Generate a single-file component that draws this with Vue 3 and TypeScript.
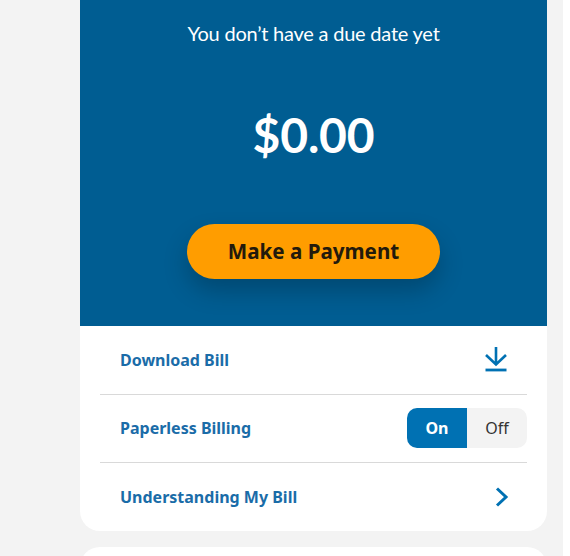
<script setup lang="ts">
const title = "You don’t have a due date yet";
</script>

<template>
  <div class="page">
    <div class="col">
      <section class="card">
        <div class="hero">
          <p class="due">{{ title }}</p>
          <p class="amount">$0.00</p>
          <button class="pay">Make a Payment</button>
        </div>
        <ul class="rows">
          <li class="row first">
            <span class="label">Download Bill</span>
            <svg class="icon-dl" width="24" height="26" viewBox="0 0 24 26" fill="none" stroke="#0071b3" stroke-width="2.600">
              <path d="M12 1v17.500M2 9l10 9.500L22 9" />
              <path d="M1.500 24h21" stroke-width="2.800" />
            </svg>
          </li>
          <li class="row middle">
            <span class="label">Paperless Billing</span>
            <div class="toggle">
              <span class="on">On</span>
              <span class="off">Off</span>
            </div>
          </li>
          <li class="row last">
            <span class="label">Understanding My Bill</span>
            <svg class="icon-ch" width="14" height="20" viewBox="0 0 14 20" fill="none" stroke="#0071b3" stroke-width="3">
              <path d="M2 1.500 11 10l-9 8.500" />
            </svg>
          </li>
        </ul>
      </section>
      <section class="next"></section>
    </div>
  </div>
</template>

<style>
html, body { margin: 0; background: #fff; }
</style>

<style scoped>
.page {
  width: 563px;
  height: 556px;
  background: #f3f3f3;
  overflow: hidden;
  padding-left: 80px;
  box-sizing: border-box;
}
.col { width: 467px; display: flex; flex-direction: column; gap: 16px; }
.card { background: #fff; border-radius: 0 0 20px 20px; overflow: hidden; height: 531px; }
.hero {
  height: 326px;
  background: #005d92;
  display: flex;
  flex-direction: column;
  align-items: center;
  color: #fff;
  font-family: Lato, sans-serif;
}
.due { margin: 20px 0 0; font-size: 20px; line-height: 26px; letter-spacing: -0.22px; }
.amount { margin: 53px 0 0; font-size: 48px; font-weight: 700; line-height: 72px; letter-spacing: -0.2px; }
.pay {
  margin-top: 53px;
  width: 253px;
  height: 55px;
  border: 0;
  border-radius: 28px;
  background: #ff9d00;
  color: #231a0c;
  font-family: "Noto Sans", sans-serif;
  font-size: 20.600px;
  font-weight: 700;
  box-shadow: 0 12px 24px rgba(0, 0, 0, 0.22);
  padding: 0 0 2px;
}
.rows { list-style: none; margin: 0 20px; padding: 0; }
.row {
  box-sizing: border-box;
  height: 68px;
  border-bottom: 1px solid #d9d9d9;
  display: flex;
  align-items: center;
  justify-content: space-between;
  padding-left: 20px;
}
.row.first { height: 69px; }
.row.middle { padding-bottom: 1px; }
.row.last { border-bottom: 0; }
.label { color: #1a6ca8; font-family: "Noto Sans", sans-serif; font-weight: 700; font-size: 16px; }
.icon-dl { margin-right: 19px; margin-top: -2px; }
.icon-ch { margin-right: 18px; }
.toggle {
  display: flex;
  width: 120px;
  height: 40px;
  border-radius: 10px;
  overflow: hidden;
  font-family: "Noto Sans", sans-serif;
  font-size: 16px;
}
.on, .off { display: flex; align-items: center; justify-content: center; }
.on { width: 60px; background: #0071b3; color: #fff; font-weight: 700; }
.off { width: 60px; background: #f3f3f3; color: #333; }
.next { height: 40px; background: #fff; border-radius: 20px 20px 0 0; }
</style>
